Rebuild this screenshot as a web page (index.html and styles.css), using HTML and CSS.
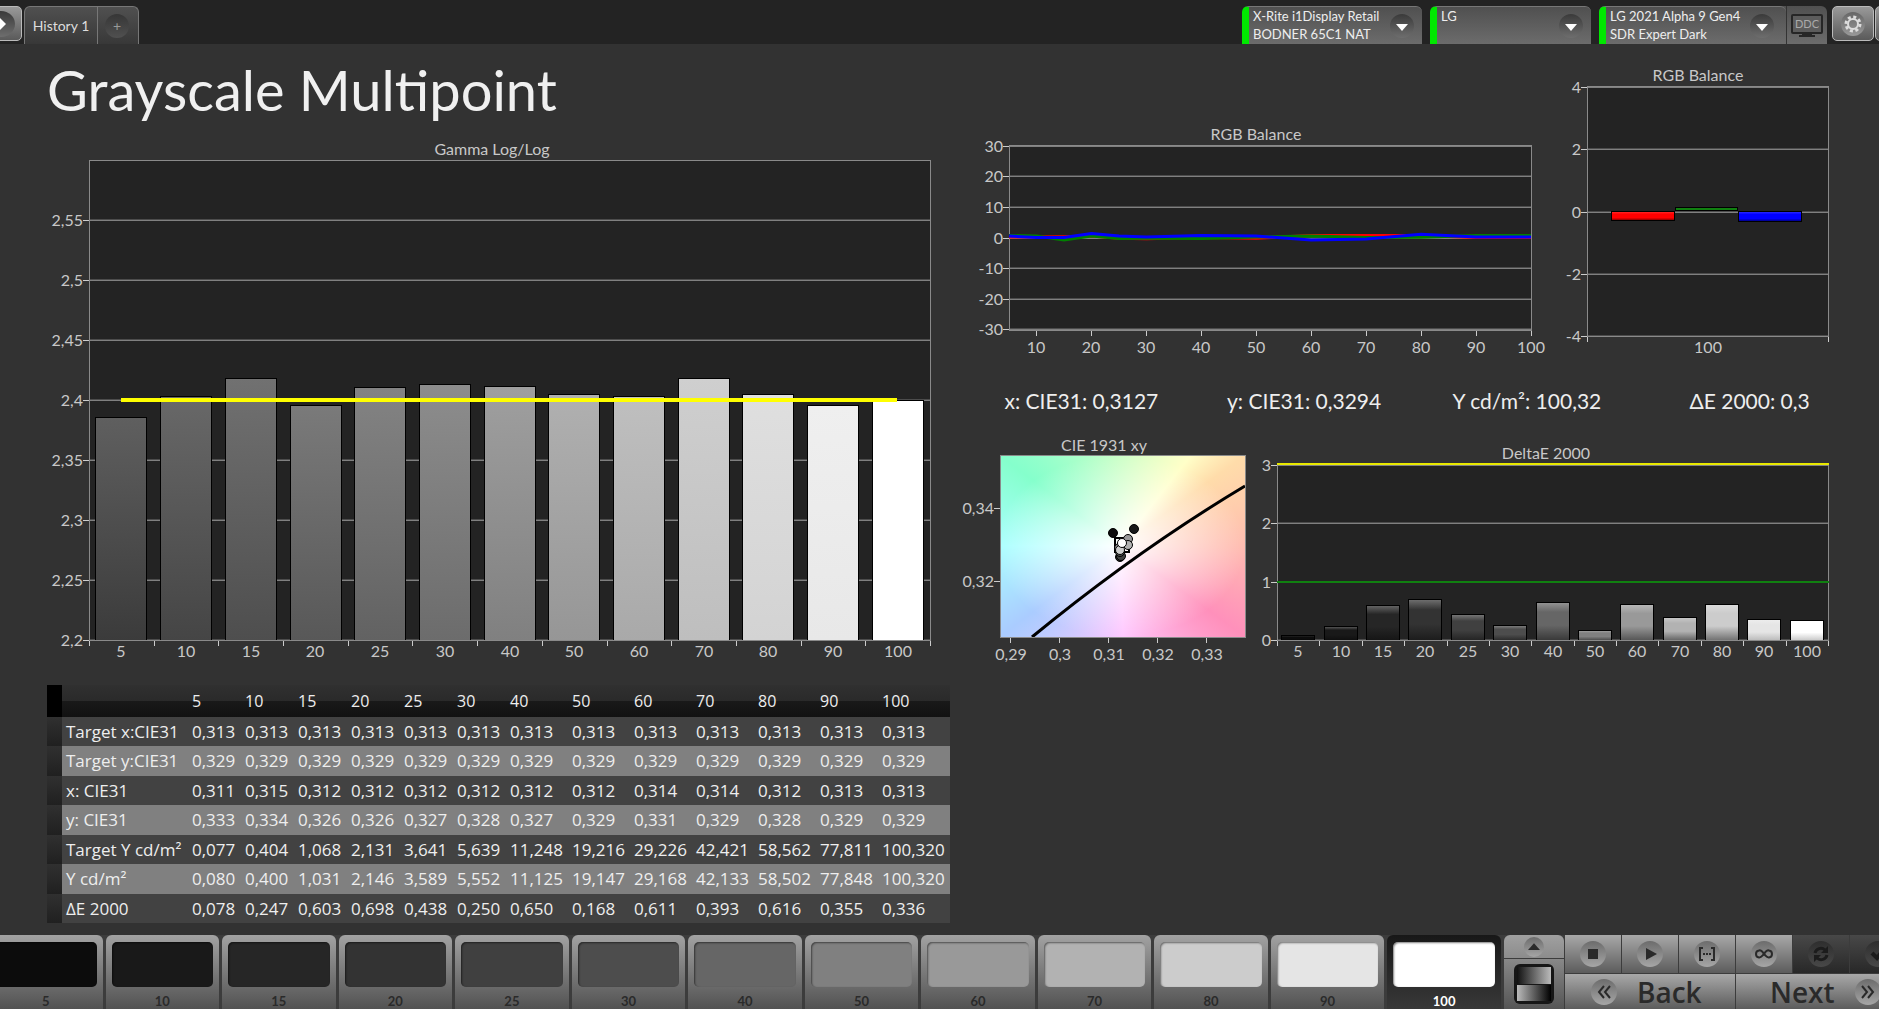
FILE: index.html
```html
<!DOCTYPE html>
<html lang="en">

<head>
    <meta charset="UTF-8">
    <meta name="viewport" content="width=device-width, initial-scale=1.0">
    <title>Grayscale Multipoint</title>
    <link rel="stylesheet" href="styles.css">
</head>

<body>
    <header class="topbar">
        <button class="edge-btn play-btn" type="button" aria-label="Open panel">
            <span class="knob"><svg viewBox="0 0 24 24"><path d="M10 5 L17 12 L10 19 Z" fill="#fff"/></svg></span>
        </button>
        <nav class="tabs">
            <button class="tab" type="button">History 1</button>
            <button class="tab tab-add" type="button" aria-label="Add tab"><span class="knob">+</span></button>
        </nav>

        <div class="devices">
            <button class="device device-meter" type="button" aria-haspopup="listbox">
                <span class="device-text">X-Rite i1Display Retail<br>BODNER 65C1 NAT</span>
                <span class="knob"><svg viewBox="0 0 24 24"><path d="M6 10 H18 L12 17 Z" fill="#fff"/></svg></span>
            </button>
            <button class="device device-source" type="button" aria-haspopup="listbox">
                <span class="device-text">LG</span>
                <span class="knob"><svg viewBox="0 0 24 24"><path d="M6 10 H18 L12 17 Z" fill="#fff"/></svg></span>
            </button>
            <div class="device-group">
                <button class="device device-display" type="button" aria-haspopup="listbox">
                    <span class="device-text">LG 2021 Alpha 9 Gen4<br>SDR Expert Dark</span>
                    <span class="knob"><svg viewBox="0 0 24 24"><path d="M6 10 H18 L12 17 Z" fill="#fff"/></svg></span>
                </button>
                <button class="ddc" type="button">
                    <svg width="34" height="26" viewBox="0 0 34 26">
                        <rect x="1" y="2" width="32" height="20" rx="2" fill="#262626"/>
                        <rect x="3" y="4" width="28" height="16" fill="#5c5c5c"/>
                        <path d="M12 22 H22 V23 H25 V25 H9 V23 H12 Z" fill="#262626"/>
                        <text x="17" y="16" text-anchor="middle" class="ddc-text">DDC</text>
                    </svg>
                </button>
            </div>
        </div>
        <button class="edge-btn" type="button" aria-label="Settings">
            <span class="knob knob-light">
                <svg viewBox="0 0 24 24" fill="none" stroke="#ddd">
                    <circle cx="12" cy="12" r="5" stroke-width="2"/>
                    <circle cx="12" cy="12" r="7" stroke-width="3" stroke-dasharray="3 2.5"/>
                </svg>
            </span>
        </button>
        <button class="edge-btn edge-next" type="button" aria-label="More"></button>
    </header>

    <main class="page">
        <section class="left">
            <h1>Grayscale Multipoint</h1>
            <svg id="gamma" class="chart" viewBox="0 0 903 527"></svg>

            <table class="readings">
                <colgroup>
                    <col class="col-mark">
                    <col class="col-name">
                    <col class="col-sm" span="6">
                    <col class="col-md" span="6">
                    <col>
                </colgroup>
                <thead id="tableHead"></thead>
                <tbody id="tableBody"></tbody>
            </table>
        </section>

        <section class="right">
            <div class="row row-balance">
                <svg id="rgbLines" class="chart" viewBox="0 0 588 232"></svg>
                <svg id="rgbBars" class="chart" viewBox="0 0 282 292"></svg>
            </div>
            <div class="values">
                <span>x: CIE31: 0,3127</span>
                <span>y: CIE31: 0,3294</span>
                <span>Y cd/m²: 100,32</span>
                <span>ΔE 2000: 0,3</span>
            </div>
            <div class="row row-error">
                <svg id="cie" class="chart" viewBox="0 0 290 230"></svg>
                <svg id="deltaE" class="chart" viewBox="0 0 580 230"></svg>
            </div>
        </section>
    </main>

    <footer class="bottombar">
        <div class="patches" id="patches"></div>

        <div class="pattern">
            <button class="pattern-up" type="button" aria-label="Expand">
                <span class="disc disc-sm"><svg viewBox="0 0 24 24"><path d="M4 16 L12 7 L20 16 Z" fill="#2a2a2a"/></svg></span>
            </button>
            <button class="pattern-pick" type="button" aria-label="Pattern">
                <span class="ramp"><i class="ramp-up"></i><i class="ramp-down"></i></span>
            </button>
        </div>

        <div class="transport">
            <button type="button" aria-label="Stop"><span class="disc"><svg viewBox="0 0 24 24"><rect x="7" y="7" width="10" height="10" fill="#2a2a2a"/></svg></span></button>
            <button type="button" aria-label="Play"><span class="disc"><svg viewBox="0 0 24 24"><path d="M8 6 L19 12 L8 18 Z" fill="#2a2a2a"/></svg></span></button>
            <button type="button" aria-label="Read range"><span class="disc"><svg viewBox="0 0 24 24" fill="none" stroke="#2a2a2a" stroke-width="2"><path d="M8 6 H5 V18 H8 M16 6 H19 V18 H16"/><path d="M8 12 H16" stroke-dasharray="2 1"/></svg></span></button>
            <button type="button" aria-label="Loop"><span class="disc"><svg viewBox="0 0 24 24" fill="none" stroke="#2a2a2a" stroke-width="2"><path d="M12 12 C10 9 8 8 7 8.500 C3 9 3 15 7 15.500 C9 16 10 14 12 12 C14 9 16 8 17 8.500 C21 9 21 15 17 15.500 C15 16 14 14 12 12 Z"/></svg></span></button>
            <button class="off" type="button" aria-label="Refresh"><span class="disc"><svg viewBox="0 0 24 24" fill="none" stroke="#1c1c1c" stroke-width="3"><path d="M6 11 A6 6 0 0 1 16 8 M18 13 A6 6 0 0 1 8 16"/><path d="M19 4 V11 H12 Z M5 20 V13 H12 Z" fill="#1c1c1c" stroke="none"/></svg></span></button>
            <button class="off" type="button" aria-label="Accept"><span class="disc"><svg viewBox="0 0 24 24" fill="none" stroke="#1c1c1c" stroke-width="4"><path d="M6 11 L11 16 L18 7"/></svg></span></button>
            <button class="wide back" type="button">
                <span class="disc"><svg viewBox="0 0 24 24" fill="none" stroke="#2a2a2a" stroke-width="2"><path d="M12 6 L7 12 L12 18 M18 6 L13 12 L18 18"/></svg></span>
                Back
            </button>
            <button class="wide next" type="button">
                Next
                <span class="disc"><svg viewBox="0 0 24 24" fill="none" stroke="#2a2a2a" stroke-width="2"><path d="M6 6 L11 12 L6 18 M12 6 L17 12 L12 18"/></svg></span>
            </button>
        </div>
    </footer>

    <script src="script.js"></script>
</body>

</html>
```

FILE: styles.css
```css
* {
    box-sizing: border-box;
}

body {
    margin: 0;
    min-height: 100vh;
    display: flex;
    flex-direction: column;
    overflow: hidden;
    background-color: #323232;
    color: #eee;
    font-family: Lato, "Liberation Sans", sans-serif;
}

button {
    margin: 0;
    padding: 0;
    border: 0;
    background: none;
    color: inherit;
    font-family: inherit;
    cursor: pointer;
}

svg {
    display: block;
}

/* Top bar */
.topbar {
    display: flex;
    align-items: flex-start;
    height: 44px;
    padding-top: 6px;
    background-color: #232323;
    overflow: hidden;
}

.knob {
    display: flex;
    align-items: center;
    justify-content: center;
    flex: none;
    width: 24px;
    height: 24px;
    border-radius: 50%;
    background: linear-gradient(#3a3a3a, #6e6e6e);
}

.knob svg {
    width: 24px;
    height: 24px;
}

.knob-light {
    background: linear-gradient(#666, #9a9a9a);
}

.edge-btn {
    display: flex;
    align-items: center;
    justify-content: center;
    flex: none;
    width: 42px;
    height: 35px;
    border: 1px solid #bbb;
    border-radius: 5px;
    background: linear-gradient(#999, #5a5a5a);
}

.play-btn {
    margin-left: -20px;
}

.play-btn .knob {
    width: 28px;
    height: 26px;
}

.edge-next {
    margin: 0 -38px 0 1px;
}

.tabs {
    display: flex;
    height: 38px;
    margin-left: 2px;
    border: 1px solid #777;
    border-bottom: 0;
    border-radius: 6px 6px 0 0;
    background: linear-gradient(#505050, #383838);
}

.tab {
    width: 72px;
    font-size: 14px;
    color: #ddd;
}

.tab-add {
    display: flex;
    align-items: center;
    justify-content: center;
    width: 41px;
    padding-right: 2px;
    border-left: 1px solid #777;
    color: #999;
}

.tab-add .knob {
    background: linear-gradient(#363636, #505050);
}

.devices {
    display: flex;
    gap: 8px;
    margin-left: auto;
    margin-right: 5px;
}

.device,
.device-group {
    display: flex;
    height: 38px;
    border-radius: 6px 6px 0 0;
    background: linear-gradient(#505050, #6c6c6c);
}

.device {
    align-items: center;
    justify-content: space-between;
    padding-right: 8px;
    border-top: 1px solid #777;
    border-left: 7px solid #00e800;
    text-align: left;
}

.device-text {
    align-self: flex-start;
    padding-left: 4px;
    font-size: 13px;
    line-height: 18px;
    white-space: nowrap;
}

.device-meter {
    width: 180px;
}

.device-source {
    width: 161px;
}

.device-display {
    width: 187px;
    padding-right: 12px;
}

.ddc {
    display: flex;
    align-items: center;
    justify-content: center;
    width: 41px;
    border-left: 1px solid #333;
}

.ddc-text {
    font-size: 11px;
    fill: #aaa;
}

/* Page */
.page {
    flex: 1;
    display: grid;
    grid-template-columns: 903fr 880fr;
    gap: 10px;
    padding: 0 39px 0 47px;
}

h1 {
    margin: 10px 0 12px;
    font-size: 56px;
    line-height: 72px;
    font-weight: 400;
    color: #f0f0f0;
}

.chart {
    width: 100%;
    overflow: visible;
}

.row {
    display: grid;
    gap: 10px;
    align-items: end;
}

.row-balance {
    grid-template-columns: 588fr 282fr;
    margin-top: 21px;
}

.row-error {
    grid-template-columns: 290fr 580fr;
}

.values {
    display: grid;
    grid-template-columns: repeat(4, 1fr);
    margin: 0 -21px 0 10px;
    padding: 32px 0 22px;
    font-size: 21px;
    line-height: 24px;
    text-align: center;
}

/* Chart parts */
.chart text {
    font-size: 16px;
    fill: #c8c8c8;
}

.plot-bg {
    fill: #232323;
}

.frame {
    fill: none;
    stroke: #8a8a8a;
    stroke-width: 1;
}

.chart .crisp {
    shape-rendering: crispEdges;
}

.grid-line {
    stroke: #808080;
    stroke-width: 1;
}

.grid-shade {
    stroke: #4c4c4c;
    stroke-width: 1;
}

.tick {
    stroke: #ccc;
    stroke-width: 1;
}

.bar {
    stroke: #000;
    stroke-width: 1;
}

.chart .series {
    fill: none;
    stroke-width: 3;
}

.gamut {
    width: 100%;
    height: 100%;
    background:
        radial-gradient(farthest-side at 49% 50%, #fff 0%, rgba(255, 255, 255, 0.5) 50%, rgba(255, 255, 255, 0) 100%),
        conic-gradient(from 0deg at 49% 50%, #ccffc8 0deg, #ffffc8 38deg, #ffdcaa 54deg, #ffbcb0 90deg, #ff90bb 126deg, #ffc8ff 178deg, #aaccff 233deg, #aaffff 270deg, #85ffcc 307deg, #ccffc8 360deg);
}

/* Table */
.readings {
    width: 100%;
    margin-top: 20px;
    border-collapse: collapse;
    table-layout: fixed;
    font-family: "Open Sans", "Noto Sans", sans-serif;
    font-size: 17px;
    line-height: 20px;
    color: #eee;
}

.col-mark {
    width: 15px;
}

.col-name {
    width: 126px;
}

.col-sm {
    width: 53px;
}

.col-md {
    width: 62px;
}

.readings th,
.readings td {
    padding: 0 0 0 4px;
    font-weight: 400;
    text-align: left;
    white-space: nowrap;
}

.readings thead tr {
    height: 32px;
    font-size: 16px;
    background: linear-gradient(#303030, #2a2a2a 50%, #191919 50%, #111);
}

.readings thead .mark {
    background: #000;
}

.readings tbody tr {
    height: 29px;
    background: #424242;
}

.readings tbody tr:nth-child(even) {
    height: 30px;
    background: #808080;
}

.readings tbody .mark {
    background: linear-gradient(#303030, #202020);
}

/* Bottom bar */
.bottombar {
    display: flex;
    height: 74px;
    overflow: hidden;
    background: #3c3c3c;
}

.patches {
    flex: 1;
    display: flex;
    gap: 3px;
    margin-left: -11px;
    margin-right: 3px;
}

.patch {
    flex: 1;
    display: flex;
    flex-direction: column;
    padding: 7px 6px 0;
    border-radius: 6px 6px 0 0;
    background: linear-gradient(#a2a2a2, #525252);
    color: #2a2a2a;
    font-size: 13px;
    line-height: 16px;
    font-weight: 700;
    text-align: center;
}

.patch-color {
    height: 45px;
    margin-bottom: 6px;
    border-radius: 5px;
    box-shadow: inset 1px 1px 2px rgba(0, 0, 0, 0.5);
}

.patch.active {
    background: linear-gradient(#181818, #383838);
    color: #fff;
}

.pattern {
    display: flex;
    flex-direction: column;
    flex: none;
    gap: 1px;
    width: 60px;
    margin-right: 1px;
}

.pattern-up {
    height: 23px;
    display: flex;
    align-items: center;
    justify-content: center;
    border-radius: 6px 6px 0 0;
    background: linear-gradient(#a0a0a0, #8c8c8c);
}

.pattern-pick {
    flex: 1;
    display: flex;
    align-items: center;
    justify-content: center;
    background: linear-gradient(#888, #555);
}

.ramp {
    display: flex;
    flex-direction: column;
    width: 40px;
    height: 40px;
    padding: 3px;
    border-radius: 6px;
    background: #161616;
}

.ramp i {
    flex: 1;
}

.ramp-up {
    background: linear-gradient(to right, #111, #bbb);
}

.ramp-down {
    margin-top: 1px;
    background: linear-gradient(to right, #bbb, #000);
}

.disc {
    display: block;
    flex: none;
    width: 26px;
    height: 26px;
    padding: 1px;
    border-radius: 50%;
    background: linear-gradient(#6c6c6c, #a6a6a6);
}

.disc-sm {
    width: 20px;
    height: 20px;
}

.transport {
    flex: none;
    display: grid;
    grid-template-columns: repeat(6, 56px);
    grid-template-rows: 38px 35px;
    gap: 1px;
    width: 314px;
}

.transport button {
    display: flex;
    align-items: center;
    justify-content: center;
    background: linear-gradient(#a8a8a8, #5c5c5c);
}

.transport .off {
    background: linear-gradient(#484848, #282828);
}

.transport .off .disc {
    background: linear-gradient(#2e2e2e, #484848);
}

.transport .wide {
    grid-column: span 3;
    justify-content: flex-start;
    gap: 20px;
    color: #2a2a2a;
    font-family: "Open Sans", "Noto Sans", sans-serif;
    font-size: 28px;
    line-height: 34px;
    font-weight: 600;
}

.transport .back {
    padding-left: 26px;
}

.transport .next {
    padding-left: 34px;
}
```

FILE: script.js
```javascript
var levels = [5, 10, 15, 20, 25, 30, 40, 50, 60, 70, 80, 90, 100];

// patch colors for the bottom strip and the DeltaE bars
var grays = ["#0c0c0c", "#191919", "#262626", "#333333", "#404040", "#4d4d4d", "#666666", "#808080", "#999999", "#b2b2b2", "#cccccc", "#e5e5e5", "#ffffff"];

// top and bottom color of each gamma bar
var gammaColors = [
    ["#5f5f5f", "#3b3b3b"], ["#686868", "#454545"], ["#717171", "#4e4e4e"], ["#7a7a7a", "#585858"],
    ["#838383", "#626262"], ["#8d8d8d", "#6c6c6c"], ["#9f9f9f", "#808080"], ["#b0b0b0", "#969696"],
    ["#bfbfbf", "#a9a9a9"], ["#cfcfcf", "#bebebe"], ["#dfdfdf", "#d3d3d3"], ["#efefef", "#e8e8e8"], ["#ffffff", "#ffffff"]
];

var gamma = [2.386, 2.4035, 2.4185, 2.396, 2.411, 2.4135, 2.412, 2.405, 2.4035, 2.4185, 2.405, 2.396, 2.4];
var deltaE = [0.078, 0.247, 0.603, 0.698, 0.438, 0.250, 0.650, 0.168, 0.611, 0.393, 0.616, 0.355, 0.336];

var rgb = {
    red: [0.5, 0.5, 0.6, 0.8, 0.1, -0.1, 0.3, 0.1, 1, 1, 1, 0.3, 0.3],
    green: [1, 0.8, -0.5, 0.8, 0, 0.1, 0, 0.5, 0.8, 0.3, 0.4, 1, 1],
    blue: [0.8, 0.3, 0.3, 1.6, 0.8, 0.5, 1, 0.8, -0.5, -0.2, 1.4, 0.5, 0.5]
};

var rows = [
    ["Target x:CIE31", "0,313 0,313 0,313 0,313 0,313 0,313 0,313 0,313 0,313 0,313 0,313 0,313 0,313"],
    ["Target y:CIE31", "0,329 0,329 0,329 0,329 0,329 0,329 0,329 0,329 0,329 0,329 0,329 0,329 0,329"],
    ["x: CIE31", "0,311 0,315 0,312 0,312 0,312 0,312 0,312 0,312 0,314 0,314 0,312 0,313 0,313"],
    ["y: CIE31", "0,333 0,334 0,326 0,326 0,327 0,328 0,327 0,329 0,331 0,329 0,328 0,329 0,329"],
    ["Target Y cd/m²", "0,077 0,404 1,068 2,131 3,641 5,639 11,248 19,216 29,226 42,421 58,562 77,811 100,320"],
    ["Y cd/m²", "0,080 0,400 1,031 2,146 3,589 5,552 11,125 19,147 29,168 42,133 58,502 77,848 100,320"],
    ["ΔE 2000", "0,078 0,247 0,603 0,698 0,438 0,250 0,650 0,168 0,611 0,393 0,616 0,355 0,336"]
];

function line(x1, y1, x2, y2, cls) {
    return '<line x1="' + x1 + '" y1="' + y1 + '" x2="' + x2 + '" y2="' + y2 + '" class="crisp ' + cls + '"/>';
}

function label(x, y, text, anchor) {
    return '<text x="' + x + '" y="' + y + '" text-anchor="' + anchor + '">' + text + '</text>';
}

function yPos(p, v) {
    return Math.round(p.y + p.h * (p.max - v) / (p.max - p.min));
}

function gradient(id, stops) {
    var out = '<linearGradient id="' + id + '" x1="0" y1="0" x2="0" y2="1">';
    for (var i = 0; i < stops.length; i++) {
        out += '<stop offset="' + stops[i][0] + '" stop-color="' + stops[i][1] + '"/>';
    }
    return out + '</linearGradient>';
}

// background, grid lines and value labels
function plotBase(p) {
    var out = '<rect x="' + p.x + '" y="' + p.y + '" width="' + p.w + '" height="' + p.h + '" class="plot-bg"/>';
    for (var i = 0; i < p.yTicks.length; i++) {
        var y = yPos(p, p.yTicks[i]);
        out += line(p.x, y - 0.5, p.x + p.w, y - 0.5, "grid-shade");
        out += line(p.x, y + 0.5, p.x + p.w, y + 0.5, "grid-line");
        out += line(p.x - 6, y + 0.5, p.x, y + 0.5, "tick");
        out += label(p.x - 6, y + 6, String(p.yTicks[i]).replace(".", ","), "end");
    }
    return out;
}

function frame(p) {
    return '<rect x="' + (p.x + 0.5) + '" y="' + (p.y + 0.5) + '" width="' + p.w + '" height="' + p.h + '" class="crisp frame"/>' +
        label(p.titleX, p.titleY, p.title, "middle");
}

// one bar per level, with the tick marks between them
function barChart(p, values, fills, prefix) {
    var out = plotBase(p);
    var slot = p.w / values.length;
    var bottom = p.y + p.h;
    for (var i = 0; i < values.length; i++) {
        var top = yPos(p, values[i]);
        var x = Math.round(p.x + slot * i + slot * 0.1);
        out += '<defs>' + gradient(prefix + i, fills[i]) + '</defs>';
        out += '<rect x="' + (x + 0.5) + '" y="' + (top + 0.5) + '" width="' + Math.floor(slot * 0.8) + '" height="' + (bottom - top) +
            '" fill="url(#' + prefix + i + ')" class="crisp bar"/>';
        out += label(Math.round(p.x + slot * (i + 0.5)), bottom + 17, levels[i], "middle");
    }
    out += frame(p);
    for (var j = 0; j <= values.length; j++) {
        var tx = Math.round(p.x + slot * j) + 0.5;
        out += line(tx, bottom + 1, tx, bottom + 6, "tick");
    }
    return out;
}

function drawGamma() {
    var p = {
        x: 42, y: 22, w: 841, h: 480, min: 2.2, max: 2.6,
        yTicks: [2.55, 2.5, 2.45, 2.4, 2.35, 2.3, 2.25, 2.2],
        title: "Gamma Log/Log", titleX: 445, titleY: 17
    };
    var fills = gammaColors.map(function (c) { return [[0, c[0]], [1, c[1]]]; });
    var out = barChart(p, gamma, fills, "g");
    out += '<line x1="74" y1="262" x2="850" y2="262" stroke="#ffff00" stroke-width="4" class="crisp"/>';
    document.getElementById("gamma").innerHTML = out;
}

function drawDeltaE() {
    var p = {
        x: 17, y: 29, w: 551, h: 176, min: 0, max: 3.02,
        yTicks: [3, 2, 1, 0], title: "DeltaE 2000", titleX: 286, titleY: 24
    };
    var fills = grays.map(function (c, i) {
        var n = parseInt(c.substr(1, 2), 16);
        var hi = Math.min(255, n + Math.round((255 - n) * 0.3));
        var lo = Math.round(n * 0.55 + (i > 10 ? 60 : 0));
        return [[0, "rgb(" + hi + "," + hi + "," + hi + ")"], [0.25, c], [0.6, c], [1, "rgb(" + lo + "," + lo + "," + lo + ")"]];
    });
    var out = barChart(p, deltaE, fills, "d");
    out += '<line x1="17" y1="147" x2="569" y2="147" stroke="#108010" stroke-width="2" class="crisp"/>';
    out += '<line x1="17" y1="29" x2="569" y2="29" stroke="#e8e800" stroke-width="2" class="crisp"/>';
    document.getElementById("deltaE").innerHTML = out;
}

function drawRgbLines() {
    var p = {
        x: 49, y: 20, w: 522, h: 185, min: -30.3, max: 30.3,
        yTicks: [30, 20, 10, 0, -10, -20, -30], title: "RGB Balance", titleX: 296, titleY: 15
    };
    var out = plotBase(p) + frame(p);
    for (var name in rgb) {
        var points = rgb[name].map(function (v, i) {
            return (p.x + p.w * (levels[i] - 5) / 95) + "," + (p.y + 1 + p.h * (p.max - v) / (p.max - p.min));
        });
        out += '<polyline points="' + points.join(" ") + '" stroke="' + name + '" class="series"/>';
    }
    for (var v = 10; v <= 100; v += 10) {
        var x = Math.round(p.x + p.w * (v - 5) / 95);
        out += line(x + 0.5, p.y + p.h + 1, x + 0.5, p.y + p.h + 6, "tick");
        out += label(x, p.y + p.h + 23, v, "middle");
    }
    document.getElementById("rgbLines").innerHTML = out;
}

function drawRgbBars() {
    var p = {
        x: 29, y: 21, w: 241, h: 250, min: -4, max: 4.04,
        yTicks: [4, 2, 0, -2, -4], title: "RGB Balance", titleX: 140, titleY: 16
    };
    var out = plotBase(p) + frame(p);
    out += '<defs>' + gradient("red", [[0, "#ff3030"], [0.3, "#ff0000"], [0.7, "#ff0000"], [1, "#700000"]]) +
        gradient("blue", [[0, "#3030ff"], [0.3, "#0000ff"], [0.7, "#0000ff"], [1, "#000070"]]) + '</defs>';
    out += '<rect x="53.5" y="146.5" width="63" height="9" fill="url(#red)" class="crisp bar"/>';
    out += '<rect x="117.5" y="142.5" width="62" height="3" fill="#108010" class="crisp bar"/>';
    out += '<rect x="180.5" y="146.5" width="63" height="10" fill="url(#blue)" class="crisp bar"/>';
    out += line(29.5, 272, 29.5, 277, "tick") + line(270.5, 272, 270.5, 277, "tick");
    out += label(150, 288, "100", "middle");
    document.getElementById("rgbBars").innerHTML = out;
}

function drawCie() {
    var p = { x: 40, y: 20, w: 245, h: 182, title: "CIE 1931 xy", titleX: 144, titleY: 16 };
    var out = '<foreignObject x="40" y="20" width="245" height="182"><div xmlns="http://www.w3.org/1999/xhtml" class="gamut"></div></foreignObject>';
    // daylight locus
    out += '<path d="M72 202 Q178 115 285 51" fill="none" stroke="#000" stroke-width="3"/>';
    out += '<rect x="155" y="103" width="14" height="14" fill="none" stroke="#000" stroke-width="2"/>';
    var dots = [
        [153, 98, "#0c0c0c"], [174, 94, "#191919"], [160, 122, "#262626"], [161, 121, "#404040"],
        [160, 117, "#4d4d4d"], [159, 113, "#808080"], [168, 104, "#999999"], [168, 110, "#b2b2b2"],
        [160, 115, "#cccccc"], [162, 108, "#ffffff"]
    ];
    for (var i = 0; i < dots.length; i++) {
        out += '<circle cx="' + dots[i][0] + '" cy="' + dots[i][1] + '" r="4.5" fill="' + dots[i][2] + '" stroke="#000"/>';
    }
    out += frame(p);
    out += line(34, 73.5, 40, 73.5, "tick") + label(34, 79, "0,34", "end");
    out += line(34, 146.5, 40, 146.5, "tick") + label(34, 152, "0,32", "end");
    var xs = ["0,29", "0,3", "0,31", "0,32", "0,33"];
    for (var j = 0; j < xs.length; j++) {
        out += line(50.5 + 49 * j, 203, 50.5 + 49 * j, 208, "tick");
        out += label(51 + 49 * j, 225, xs[j], "middle");
    }
    document.getElementById("cie").innerHTML = out;
}

function fillTable() {
    document.getElementById("tableHead").innerHTML = '<tr><td class="mark"></td><td></td>' +
        levels.map(function (l) { return '<th scope="col">' + l + '</th>'; }).join("") + '</tr>';
    document.getElementById("tableBody").innerHTML = rows.map(function (r) {
        return '<tr><td class="mark"></td><th scope="row">' + r[0] + '</th><td>' + r[1].split(" ").join("</td><td>") + '</td></tr>';
    }).join("");
}

function fillPatches() {
    document.getElementById("patches").innerHTML = levels.map(function (l, i) {
        return '<button type="button" class="patch' + (l == 100 ? " active" : "") + '">' +
            '<span class="patch-color" style="background-color: ' + grays[i] + '"></span>' + l + '</button>';
    }).join("");
}

drawGamma();
drawRgbLines();
drawRgbBars();
drawCie();
drawDeltaE();
fillTable();
fillPatches();
```
